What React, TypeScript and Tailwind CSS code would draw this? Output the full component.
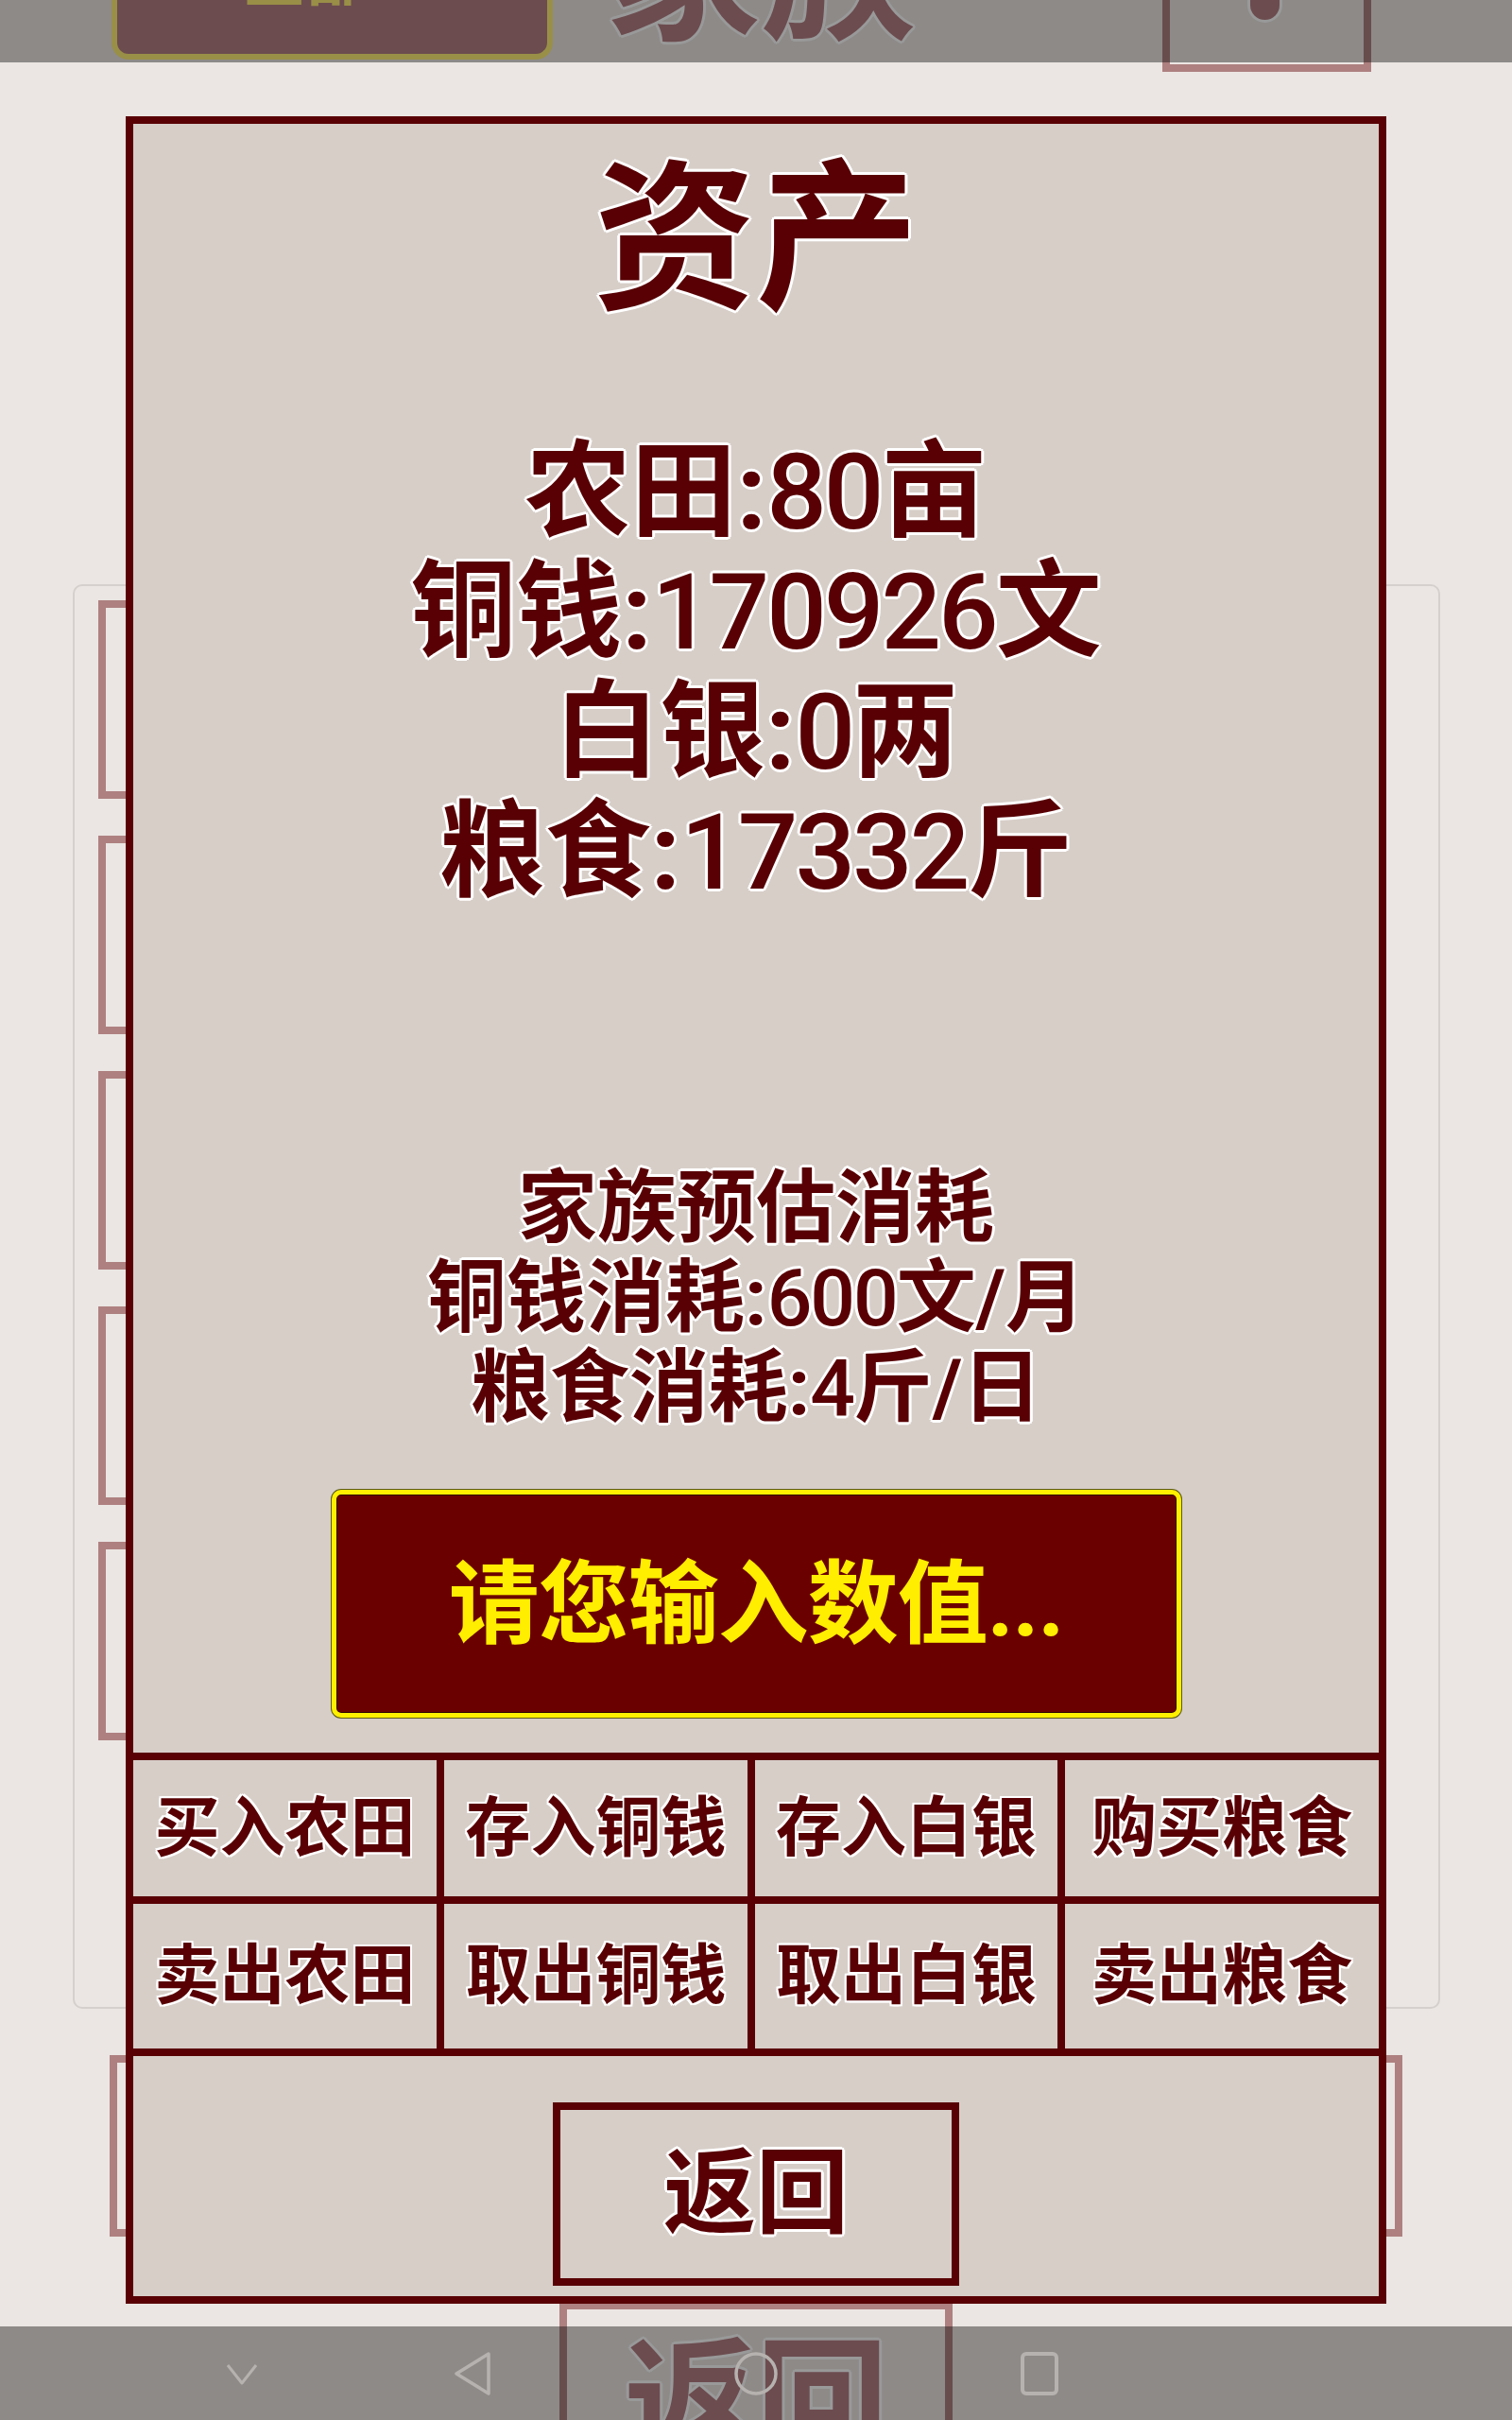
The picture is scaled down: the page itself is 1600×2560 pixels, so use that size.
import React from "react";

const FONT = "font-['Roboto','Noto_Sans_CJK_SC',sans-serif]";

// white halo around the maroon lettering
const HALO_L =
  "[text-shadow:3px_0_0_#fff,-3px_0_0_#fff,0_3px_0_#fff,0_-3px_0_#fff,2px_2px_0_#fff,-2px_-2px_0_#fff,2px_-2px_0_#fff,-2px_2px_0_#fff]";
const HALO_S =
  "[text-shadow:2px_0_0_#fff,-2px_0_0_#fff,0_2px_0_#fff,0_-2px_0_#fff,2px_2px_0_#fff,-2px_-2px_0_#fff,2px_-2px_0_#fff,-2px_2px_0_#fff]";

const ACTIONS = [
  "买入农田",
  "存入铜钱",
  "存入白银",
  "购买粮食",
  "卖出农田",
  "取出铜钱",
  "取出白银",
  "卖出粮食",
];

// numbers are set a touch lighter and tighter than the hanzi around them
function Big({ children }: { children: React.ReactNode }) {
  return <span className="font-medium tracking-[-3px]">{children}</span>;
}
function Mid({ children }: { children: React.ReactNode }) {
  return <span className="font-medium tracking-[-2px]">{children}</span>;
}

function NavBar() {
  return (
    <div className="absolute inset-x-0 bottom-0 flex h-[99px] items-center bg-black/40">
      <svg className="ml-[238px] h-[24px] w-[36px]" viewBox="0 0 36 24">
        <path d="M3 3 L18 22 L33 3" fill="none" stroke="#B6B2AF" strokeWidth="3" strokeLinejoin="round" />
      </svg>
      <svg className="ml-[204px] h-[48px] w-[44px]" viewBox="0 0 44 48">
        <path d="M39 3 L5 24 L39 45 Z" fill="none" stroke="#B6B2AF" strokeWidth="3.5" strokeLinejoin="round" />
      </svg>
      <svg className="ml-[254px] h-[48px] w-[48px]" viewBox="0 0 48 48">
        <circle cx="24" cy="24" r="21" fill="none" stroke="#B6B2AF" strokeWidth="3.5" />
      </svg>
      <svg className="ml-[254px] h-[48px] w-[44px]" viewBox="0 0 44 48">
        <rect x="4" y="3" width="36" height="42" rx="4" fill="none" stroke="#B6B2AF" strokeWidth="4" />
      </svg>
    </div>
  );
}

function Page() {
  return (
    <div className="flex flex-col">
      <header className="flex h-[76px] items-start">
        <div className="ml-[118px] flex h-[63px] w-[467px] items-end justify-center rounded-b-[18px] border-[6px] border-t-0 border-[#FFEE77] bg-[#B47F84] pb-[46px] pr-[56px]">
          <span className="text-[67px] font-bold leading-none text-[#FFEE77]">全部</span>
        </div>
        <div className="ml-[55px] flex h-[55px] w-[330px] items-end justify-center">
          <span className={`text-[165px] font-bold leading-none text-[#B47F84] ${HALO_L}`}>家族</span>
        </div>
        <div className="ml-[260px] flex h-[76px] w-[221px] items-start border-[8px] border-t-0 border-[#AE8080] bg-[#EBE6E3]">
          <span className="-mt-[19px] ml-[85px] block h-[40px] w-[31px] rounded-full bg-[#B47F84] ring-[3px] ring-white" />
        </div>
      </header>

      <div className="ml-[77px] mt-[542px] flex h-[1507px] w-[1447px] flex-col gap-[39px] rounded-[10px] border-2 border-[#D5D0CD] pl-[25px] pt-[15px]">
        {[0, 1, 2, 3, 4].map((i) => (
          <div key={i} className="h-[210px] w-[300px] shrink-0 border-[8px] border-[#AE8080]" />
        ))}
      </div>

      <div className="ml-[116px] mt-[49px] h-[192px] w-[1368px] shrink-0 border-[8px] border-[#AE8080]" />

      <div className="ml-[592px] mt-[69px] flex h-[260px] w-[416px] shrink-0 justify-center border-[8px] border-[#AE8080] pt-[29px]">
        <span className={`text-[140px] font-bold leading-none text-[#B47F84] ${HALO_L}`}>返回</span>
      </div>
    </div>
  );
}

function AssetDialog() {
  return (
    <div className="absolute left-[133px] top-[123px] flex h-[2314px] w-[1334px] flex-col border-[8px] border-[#580004] bg-[#D7CEC8] text-center text-[#580004]">
      <div className={`mt-[37px] text-[172px] font-bold leading-none ${HALO_L}`}>资产</div>

      <div className={`mt-[117px] text-[112px] font-bold leading-[127px] ${HALO_L}`}>
        <div>
          农田:<Big>80</Big>亩
        </div>
        <div>
          铜钱:<Big>170926</Big>文
        </div>
        <div>
          白银:<Big>0</Big>两
        </div>
        <div>
          粮食:<Big>17332</Big>斤
        </div>
      </div>

      <div className={`mt-[266px] text-[84px] font-bold leading-[95px] ${HALO_L}`}>
        <div>家族预估消耗</div>
        <div>
          铜钱消耗:<Mid>600</Mid>文/月
        </div>
        <div>
          粮食消耗:<Mid>4</Mid>斤/日
        </div>
      </div>

      <div className="mx-auto mt-[60px] flex h-[241px] w-[899px] items-center justify-center rounded-[10px] border-[5px] border-[#FFF000] bg-[#6B0000] shadow-[0_0_0_1px_#5c5a1a,inset_0_0_0_1px_#2a0000]">
        <span className="text-[96px] font-bold leading-none tracking-[-1px] text-[#FFEE00]">请您输入数值...</span>
      </div>

      <div className="mt-auto grid grid-cols-[321px_321px_320px_1fr] grid-rows-[144px_153px] gap-[8px] border-y-[8px] border-[#580004] bg-[#580004]">
        {ACTIONS.map((label) => (
          <div key={label} className="flex items-center justify-center bg-[#D7CEC8]">
            <span className={`text-[69px] font-bold leading-none text-[#580004] ${HALO_S}`}>{label}</span>
          </div>
        ))}
      </div>

      <div className="flex h-[254px] justify-center pt-[49px]">
        <div className="flex h-[194px] w-[430px] items-center justify-center border-[8px] border-[#580004]">
          <span className={`text-[98px] font-bold leading-none ${HALO_L}`}>返回</span>
        </div>
      </div>
    </div>
  );
}

export default function App() {
  return (
    <div className={`relative h-[2560px] w-[1600px] overflow-hidden bg-[#EBE6E3] ${FONT}`}>
      <Page />
      <div className="absolute inset-x-0 top-0 h-[66px] bg-black/40" />
      <NavBar />
      <AssetDialog />
    </div>
  );
}
